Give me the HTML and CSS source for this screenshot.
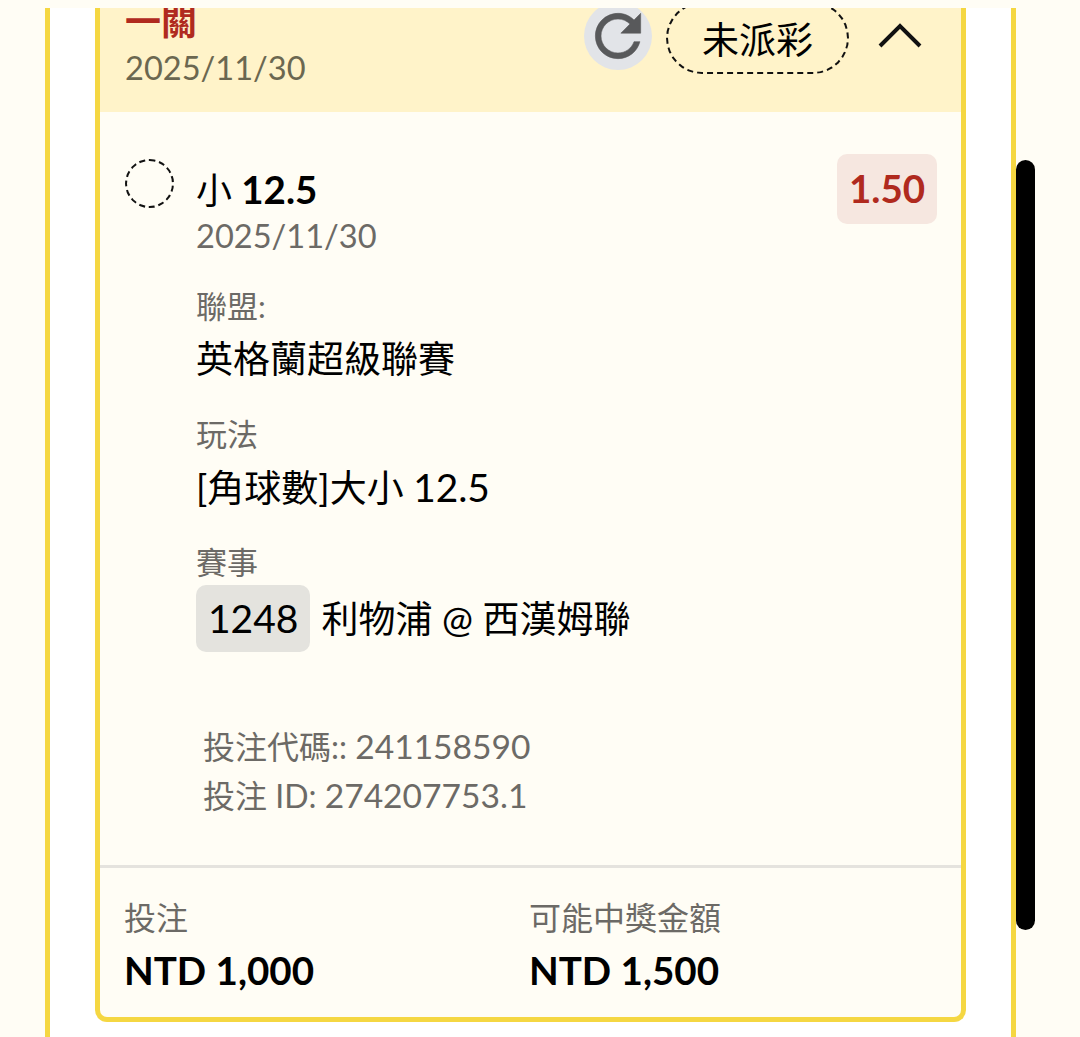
FILE: index.html
```html
<!DOCTYPE html>
<html lang="zh-Hant">
<head>
    <meta charset="UTF-8">
    <meta name="viewport" content="width=device-width, initial-scale=1.0">
    <title>Bet Detail</title>
    <link rel="stylesheet" href="styles.css">
</head>
<body>
    <div class="outer">
        <div class="card">
            <div class="card-head">
                <div class="head-left">
                    <div class="head-title">一關</div>
                    <div class="head-date">2025/11/30</div>
                </div>
                <div class="head-right">
                    <div class="refresh">
                        <svg viewBox="0 0 24 24" width="68" height="68">
                            <path d="M17.65 6.35C16.2 4.9 14.21 4 12 4c-4.42 0-7.99 3.58-7.99 8s3.57 8 7.99 8c3.73 0 6.84-2.55 7.73-6h-2.08c-.82 2.33-3.04 4-5.65 4-3.31 0-6-2.69-6-6s2.69-6 6-6c1.66 0 3.14.69 4.22 1.78L13 11h7V4l-2.35 2.35z" fill="#58595b" stroke="#58595b" stroke-width="0.2"/>
                        </svg>
                    </div>
                    <div class="status">未派彩</div>
                    <svg class="chevron" viewBox="0 0 44 26" width="44" height="26">
                        <path d="M2 24 L22 4 L42 24" fill="none" stroke="#111" stroke-width="4"/>
                    </svg>
                </div>
            </div>

            <div class="card-body">
                <div class="selection">
                    <div class="dashed-dot"></div>
                    <div class="selection-text">
                        <div class="pick">小 <b>12.5</b></div>
                        <div class="pick-date">2025/11/30</div>
                    </div>
                    <div class="odds">1.50</div>
                </div>

                <div class="details">
                    <div class="detail">
                        <div class="detail-label">聯盟:</div>
                        <div class="detail-value">英格蘭超級聯賽</div>
                    </div>
                    <div class="detail">
                        <div class="detail-label">玩法</div>
                        <div class="detail-value">[角球數]大小 <span class="num">12.5</span></div>
                    </div>
                    <div class="detail">
                        <div class="detail-label">賽事</div>
                        <div class="detail-value match">
                            <span class="match-no">1248</span>
                            <span>利物浦 @ 西漢姆聯</span>
                        </div>
                    </div>
                </div>

                <div class="codes">
                    <div>投注代碼:: <span class="num">241158590</span></div>
                    <div>投注 ID: <span class="num">274207753.1</span></div>
                </div>
            </div>

            <div class="card-foot">
                <div class="amount">
                    <div class="amount-label">投注</div>
                    <div class="amount-value">NTD 1,000</div>
                </div>
                <div class="amount">
                    <div class="amount-label">可能中獎金額</div>
                    <div class="amount-value">NTD 1,500</div>
                </div>
            </div>
        </div>
    </div>
    <div class="scrollbar"></div>
</body>
</html>
```

FILE: styles.css
```css
html, body {
    height: 100%;
}

body {
    margin: 0;
    padding-top: 8px;
    box-sizing: border-box;
    overflow: hidden;
    position: relative;
    background-color: #fffdf5;
    color: #000;
    font-family: Lato, "Noto Sans CJK TC", sans-serif;
}

.outer {
    margin-left: 45px;
    width: 971px;
    height: 1029px;
    box-sizing: border-box;
    padding: 0 45px;
    background-color: #fff;
    border-left: 5px solid #f5d742;
    border-right: 5px solid #f5d742;
}

.card {
    box-sizing: border-box;
    height: 1014px;
    background-color: #fffdf5;
    border: 5px solid #f5d742;
    border-top: 0;
    border-radius: 0 0 12px 12px;
}

.card-head {
    height: 104px;
    padding: 0 38px 0 25px;
    display: flex;
    justify-content: space-between;
    background-color: #fff3c9;
    overflow: hidden;
}

.head-left {
    margin-top: -9px;
}

.head-title {
    font-size: 36px;
    line-height: 44px;
    font-weight: 700;
    color: #b02a1e;
}

.head-date {
    margin-top: 3px;
    font-size: 32.6px;
    line-height: 44px;
    color: #6b6750;
}

.head-right {
    margin-top: -6px;
    display: flex;
    align-items: flex-start;
}

.refresh {
    width: 68px;
    height: 68px;
    margin-right: 14px;
    border-radius: 50%;
    background-color: #e2e4e8;
}

.status {
    box-sizing: border-box;
    width: 183px;
    height: 72px;
    border: 2px dashed #111;
    border-radius: 36px;
    text-align: center;
    font-size: 37px;
    line-height: 72px;
}

.chevron {
    margin: 20px 1px 0 29px;
}

.card-body {
    height: 753px;
    box-sizing: border-box;
    padding: 42px 24px 0 25px;
}

.selection {
    display: flex;
    align-items: flex-start;
}

.dashed-dot {
    box-sizing: border-box;
    width: 49px;
    height: 49px;
    margin-top: 5px;
    border: 2px dashed #111;
    border-radius: 50%;
}

.selection-text {
    flex: 1;
    margin-left: 22px;
}

.pick {
    margin-top: 12px;
    font-size: 36px;
    line-height: 47px;
}

.pick b {
    font-size: 38.5px;
}

.pick-date {
    font-size: 32.6px;
    line-height: 44px;
    color: #6c6a66;
}

.odds {
    width: 100px;
    height: 70px;
    border-radius: 10px;
    background-color: #f6e7e0;
    color: #b02a1e;
    font-size: 38.5px;
    font-weight: 700;
    line-height: 68px;
    text-align: center;
}

.details {
    margin-left: 71px;
    margin-top: 27px;
}

.detail {
    margin-bottom: 21.5px;
}

.detail-label {
    font-size: 31px;
    line-height: 42px;
    color: #6c6a66;
}

.detail-value {
    font-size: 37px;
    line-height: 64px;
}

.num {
    font-size: 1.05em;
}

.match {
    display: flex;
    align-items: center;
    gap: 11px;
    margin-top: 2px;
}

.match-no {
    padding: 0 12px;
    border-radius: 10px;
    background-color: #e4e3de;
    font-size: 39px;
    line-height: 67px;
}

.codes {
    margin: 70px 0 0 78px;
    font-size: 32px;
    line-height: 49px;
    color: #6c6a66;
}

.card-foot {
    display: flex;
    padding: 28px 24px 0;
    border-top: 3px solid #e5e3de;
}

.amount {
    width: 405px;
}

.amount-label {
    font-size: 32px;
    line-height: 44px;
    color: #6c6a66;
}

.amount-value {
    margin-top: 4px;
    font-size: 38.6px;
    font-weight: 700;
    line-height: 52px;
}

.scrollbar {
    position: absolute;
    left: 1016px;
    top: 160px;
    width: 19px;
    height: 770px;
    border-radius: 10px;
    background-color: #000;
}
```
